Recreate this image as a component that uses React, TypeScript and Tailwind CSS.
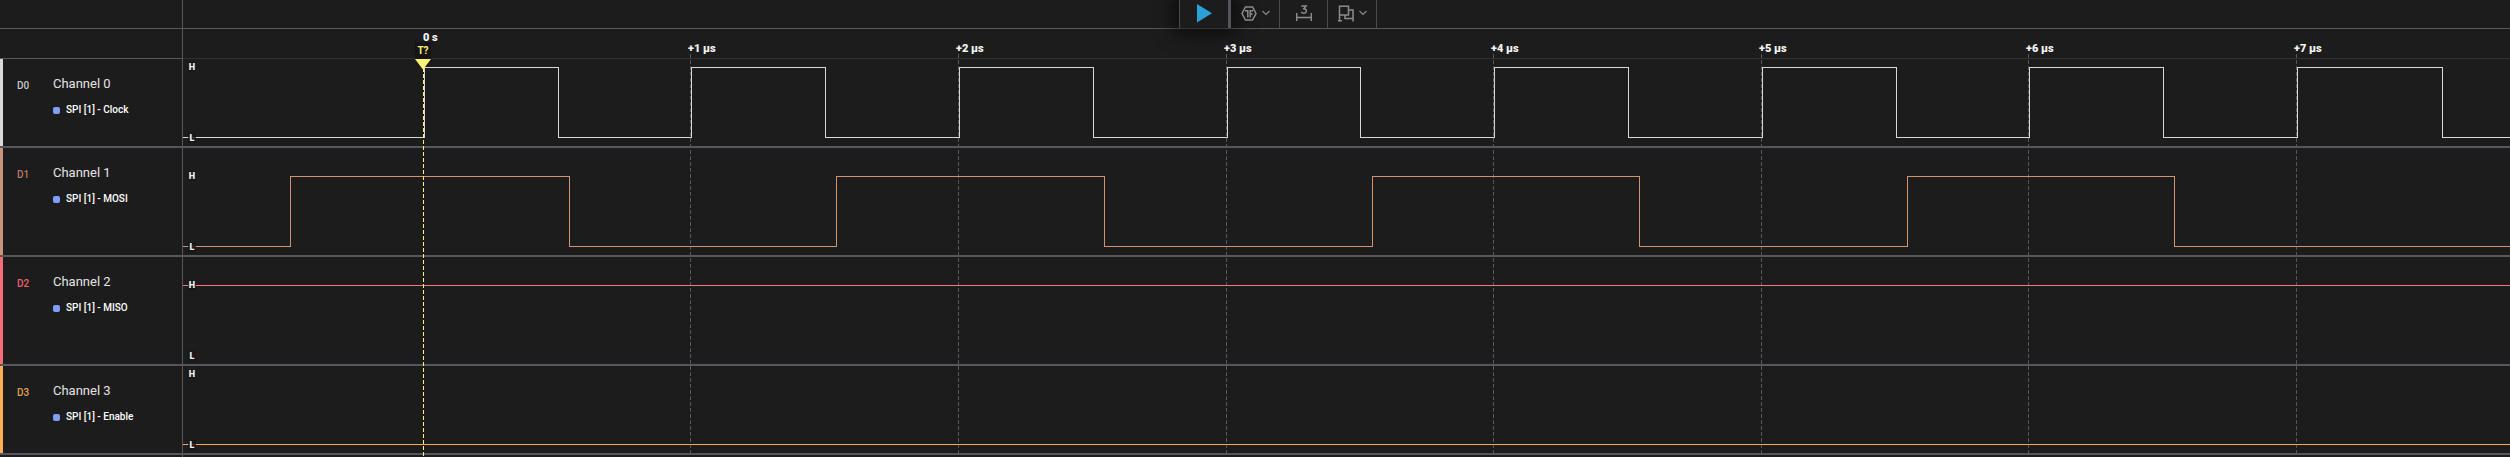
import React from "react";

type Channel = {
  id: string;
  name: string;
  role: string;
  strip: string;
  label: string;
  stroke: string;
  height: string;
  high: number;
  start: 0 | 1;
  edges: number[];
};

const SWING = 70;

const channels: Channel[] = [
  { id: "D0", name: "Channel 0", role: "SPI [1] - Clock", strip: "bg-[#d9d9d9]", label: "text-[#c9c9c9]", stroke: "#d9d9d4", height: "h-[89px]", high: 8, start: 0,
    edges: [241, 375, 508, 642, 776, 910, 1044, 1177, 1311, 1445, 1579, 1713, 1846, 1980, 2114, 2259] },
  { id: "D1", name: "Channel 1", role: "SPI [1] - MOSI", strip: "bg-[#c8957a]", label: "text-[#b97f62]", stroke: "#d0936f", height: "h-[109px]", high: 28, start: 0,
    edges: [107, 386, 653, 921, 1189, 1456, 1724, 1991] },
  { id: "D2", name: "Channel 2", role: "SPI [1] - MISO", strip: "bg-[#ff6b7a]", label: "text-[#f0616e]", stroke: "#f87580", height: "h-[109px]", high: 28, start: 1, edges: [] },
  { id: "D3", name: "Channel 3", role: "SPI [1] - Enable", strip: "bg-[#ffb052]", label: "text-[#e0a050]", stroke: "#ffab40", height: "h-[89px]", high: 8, start: 0, edges: [] },
];

const ticks = [
  { x: 240, label: "0 s" },
  { x: 507, label: "+1 µs" },
  { x: 775, label: "+2 µs" },
  { x: 1043, label: "+3 µs" },
  { x: 1310, label: "+4 µs" },
  { x: 1578, label: "+5 µs" },
  { x: 1845, label: "+6 µs" },
  { x: 2113, label: "+7 µs" },
];

function wavePath(c: Channel) {
  let level = c.start;
  const y = (l: number) => (l ? c.high : c.high + SWING) + 0.5;
  let d = `M0 ${y(level)}`;
  for (const e of c.edges) {
    d += `H${e + 0.5}`;
    level = level ? 0 : 1;
    d += `V${y(level)}`;
  }
  return d + "H9999";
}

function LevelMark({ y, children }: { y: number; children: string }) {
  return (
    <span className="absolute left-[5px] flex h-[10px] w-[8px] items-center justify-center bg-[#161616]/80 text-[9px] leading-[10px] font-black text-[#f0f0f0]" style={{ top: y - 5 }}>
      {children}
    </span>
  );
}

function Chevron() {
  return (
    <svg width="8" height="6" viewBox="0 0 8 6" fill="none" stroke="#8c8c8c" strokeWidth="1.1">
      <path d="M.5 1 4 4.5 7.5 1" />
    </svg>
  );
}

function Toolbar() {
  return (
    <div className="flex h-7 pl-[1179px]" role="toolbar" aria-label="Capture">
      <button aria-label="Start capture" className="flex w-[52px] items-start justify-center border-r-[3px] border-l border-r-[#55555c] border-l-[#4a4a50] bg-[#1c1c1c] pt-1 pl-px shadow-[0_0_18px_6px_rgba(0,0,0,0.55)]">
        <svg width="15" height="19" viewBox="0 0 15 19"><path d="M0 0 15 9.2 0 18.5Z" fill="#2a9fd8" /></svg>
      </button>
      <button aria-label="Trigger" className="flex w-[49px] items-center justify-center gap-[5px] border-r border-[#4a4a50] pb-[2px]">
        <svg width="16" height="15" viewBox="0 0 16 15" fill="none" stroke="#8c8c8c" strokeWidth="1.5">
          <path d="M4.5 1H11.5L15 7.5 11.5 14H4.5L1 7.5Z" />
          <path d="M4 4.8H6.8V11.5M12 4.8H9.2V11.5M9.2 8H11.6" />
        </svg>
        <Chevron />
      </button>
      <button aria-label="Measure" className="flex w-12 items-center justify-center border-r border-[#4a4a50] pb-[2px]">
        <svg width="16" height="16" viewBox="0 0 16 16" fill="none" stroke="#8c8c8c" strokeWidth="1.4">
          <path d="M.7 8V16M15.3 8V16M.7 12.5H15.3M5.3 1H10.2L7.8 3.7Q10.5 3.9 10.4 6 10.2 8.3 7.8 8.3 5.8 8.3 5.3 6.8" />
        </svg>
      </button>
      <button aria-label="Annotations" className="flex w-[49px] items-center justify-center gap-[5px] border-r border-[#4a4a50] pb-[2px]">
        <svg width="16" height="17" viewBox="0 0 16 17" fill="none" stroke="#8c8c8c" strokeWidth="1.5">
          <path d="M0 15.7H4M1.5 15.7V1.2H10.5V10H1.5M10.5 5H15V13.5H7V10M15 13V16.5" />
        </svg>
        <Chevron />
      </button>
    </div>
  );
}

function Ruler() {
  return (
    <div className="flex h-[30px]">
      <div className="w-[183px] shrink-0 border-r border-b border-[#56565c]" />
      <div className="relative grow border-b border-[#313136]">
        {ticks.map((t, i) => (
          <span key={t.label} className={`absolute text-[11px] leading-3 font-black whitespace-nowrap text-[#f4f4f4] ${i ? "top-[14px]" : "top-[3px]"}`} style={{ left: i ? t.x - 2 : t.x }}>
            {t.label}
          </span>
        ))}
      </div>
    </div>
  );
}

function ChannelRow({ c }: { c: Channel }) {
  return (
    <div className={`flex border-b-2 border-[#56565c] ${c.height}`}>
      <div className="flex w-[183px] shrink-0 border-r border-[#56565c]">
        <div className={`w-[3px] shrink-0 ${c.strip}`} />
        <div className={`w-[50px] shrink-0 pt-[21px] pl-[14px] text-[10px] leading-3 font-medium ${c.label}`}>{c.id}</div>
        <div className="pt-[17px]">
          <div className="text-[13px] leading-4 text-[#e4e4e4]">{c.name}</div>
          <div className="mt-3 flex items-center gap-[6px] text-[10px] leading-3 font-medium text-white">
            <span className="size-[7px] rounded-[2px] bg-[#7f9dfb]" />
            {c.role}
          </div>
        </div>
      </div>
      <div className="relative min-w-0 grow">
        <svg className="relative z-10 block size-full" fill="none" stroke={c.stroke}>
          <path d={wavePath(c)} shapeRendering="crispEdges" />
        </svg>
        <div className="absolute inset-0 z-10">
          <LevelMark y={c.high}>H</LevelMark>
          <LevelMark y={c.high + SWING + 1}>L</LevelMark>
        </div>
      </div>
    </div>
  );
}

function Overlay() {
  return (
    <div className="pointer-events-none absolute top-[42px] right-0 bottom-0 left-[183px] overflow-hidden">
      <svg className="absolute inset-0 size-full" fill="none" shapeRendering="crispEdges">
        {ticks.slice(1).map((t) => (
          <path key={t.x} d={`M${t.x + 0.5} 12V411`} stroke="#55555c" strokeDasharray="4 2" />
        ))}
      </svg>
    </div>
  );
}

function TriggerMarker() {
  return (
    <div className="pointer-events-none absolute top-[42px] bottom-0 left-[415px] z-20 flex w-4 flex-col items-center overflow-hidden">
      <span className="flex h-[17px] w-4 shrink-0 items-center justify-center bg-[#141414] pt-px text-[10px] leading-3 font-bold text-[#fff176]">T?</span>
      <svg className="w-4 grow" fill="#fff176">
        <path d="M8.5 9V999" stroke="#fff176" strokeDasharray="4 2" shapeRendering="crispEdges" />
        <path d="M0 0H16L8.5 10H7.5Z" />
      </svg>
    </div>
  );
}

export default function App() {
  return (
    <main className="relative min-h-screen w-full overflow-hidden bg-[#1c1c1c] font-[Roboto,sans-serif]">
      <header className="flex border-b border-[#56565c]">
        <div className="absolute h-7 w-[183px] border-r border-[#56565c]" />
        <Toolbar />
      </header>
      <Ruler />
      {channels.map((c) => (
        <ChannelRow key={c.id} c={c} />
      ))}
      <div className="h-[2px] w-[183px] border-r border-[#56565c]" />
      <Overlay />
      <TriggerMarker />
    </main>
  );
}
